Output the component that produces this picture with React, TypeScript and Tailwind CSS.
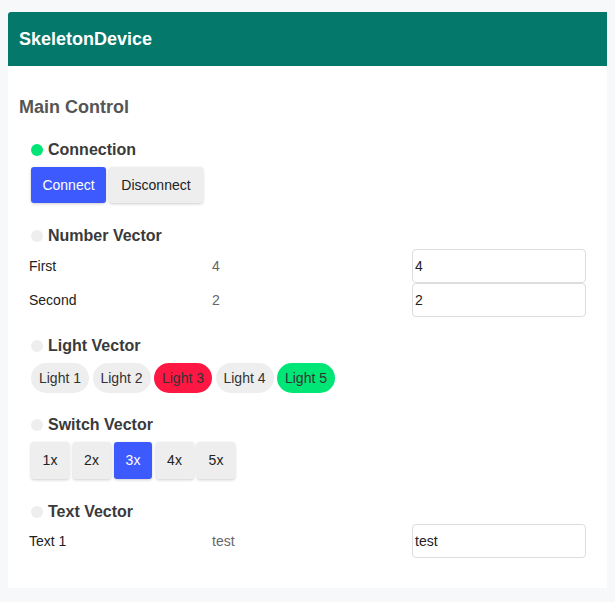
import React from 'react';

const font = { fontFamily: '"Liberation Sans", Arial, sans-serif' };

function Dot({ on }: { on?: boolean }) {
  return <span className={`inline-block w-3 h-3 rounded-full ${on ? 'bg-[#00e676]' : 'bg-[#eeeeee]'}`} />;
}

function SectionTitle({ title, on }: { title: string; on?: boolean }) {
  return (
    <div className="flex items-center gap-[5px] h-5">
      <Dot on={on} />
      <span className="text-[16px] font-bold text-[#3a3a3a]">{title}</span>
    </div>
  );
}

function Row({ label, value }: { label: string; value: string }) {
  return (
    <div className="grid grid-cols-[183px_200px_174px] items-center -ml-[2px]">
      <span className="text-[14px] text-[#222]">{label}</span>
      <span className="text-[14px] text-[#666]">{value}</span>
      <input
        defaultValue={value}
        className="h-[34px] border border-[#ddd] rounded-[4px] px-[2px] text-[14px] text-[#222] outline-none bg-white"
      />
    </div>
  );
}

export default function App() {
  const lights = [
    { name: 'Light 1', cls: 'bg-[#eeeeee]' },
    { name: 'Light 2', cls: 'bg-[#eeeeee]' },
    { name: 'Light 3', cls: 'bg-[#ff1744]' },
    { name: 'Light 4', cls: 'bg-[#eeeeee]' },
    { name: 'Light 5', cls: 'bg-[#00e676]' },
  ];
  const switches = ['1x', '2x', '3x', '4x', '5x'];

  return (
    <div className="min-h-screen bg-[#f7f8fa] pt-3 px-2 pb-[14px]" style={font}>
      <div className="bg-white">
        <header className="bg-[#04786b] h-[54px] flex items-center px-[11px] rounded-tl-[3px]">
          <h1 className="text-white text-[18px] font-bold">SkeletonDevice</h1>
        </header>

        <div className="px-[11px] pt-[31px] pb-[30px]">
          <h2 className="text-[18px] font-bold text-[#555] leading-[21px]">Main Control</h2>

          <div className="pl-3 mt-[22px]">
            {/* Connection */}
            <SectionTitle title="Connection" on />
            <div className="flex gap-[3px] mt-[7px]">
              <button className="h-9 w-[75px] bg-[#3d5afe] text-white text-[14px] rounded-[3px] shadow-[0_1px_3px_rgba(0,0,0,0.2)]">
                Connect
              </button>
              <button className="h-9 w-[94px] bg-[#eeeeee] text-[#222] text-[14px] rounded-[3px] shadow-[0_1px_3px_rgba(0,0,0,0.2)]">
                Disconnect
              </button>
            </div>

            {/* Number Vector */}
            <div className="mt-[23px]">
              <SectionTitle title="Number Vector" />
              <div className="mt-[3px] flex flex-col">
                <Row label="First" value="4" />
                <Row label="Second" value="2" />
              </div>
            </div>

            {/* Light Vector */}
            <div className="mt-[19px]">
              <SectionTitle title="Light Vector" />
              <div className="flex gap-[3.5px] mt-[7px]">
                {lights.map((l) => (
                  <span
                    key={l.name}
                    className={`h-[30px] w-[58px] rounded-full flex items-center justify-center text-[14px] text-[#333] ${l.cls}`}
                  >
                    {l.name}
                  </span>
                ))}
              </div>
            </div>

            {/* Switch Vector */}
            <div className="mt-[22px]">
              <SectionTitle title="Switch Vector" />
              <div className="flex gap-[3.5px] mt-[7px]">
                {switches.map((s) => (
                  <button
                    key={s}
                    className={`h-[37px] w-[38px] rounded-[3px] text-[14px] shadow-[0_1px_3px_rgba(0,0,0,0.2)] ${
                      s === '3x' ? 'bg-[#3d5afe] text-white' : 'bg-[#eeeeee] text-[#222]'
                    }`}
                  >
                    {s}
                  </button>
                ))}
              </div>
            </div>

            {/* Text Vector */}
            <div className="mt-[23px]">
              <SectionTitle title="Text Vector" />
              <div className="mt-[2px]">
                <Row label="Text 1" value="test" />
              </div>
            </div>
          </div>
        </div>
      </div>
    </div>
  );
}
